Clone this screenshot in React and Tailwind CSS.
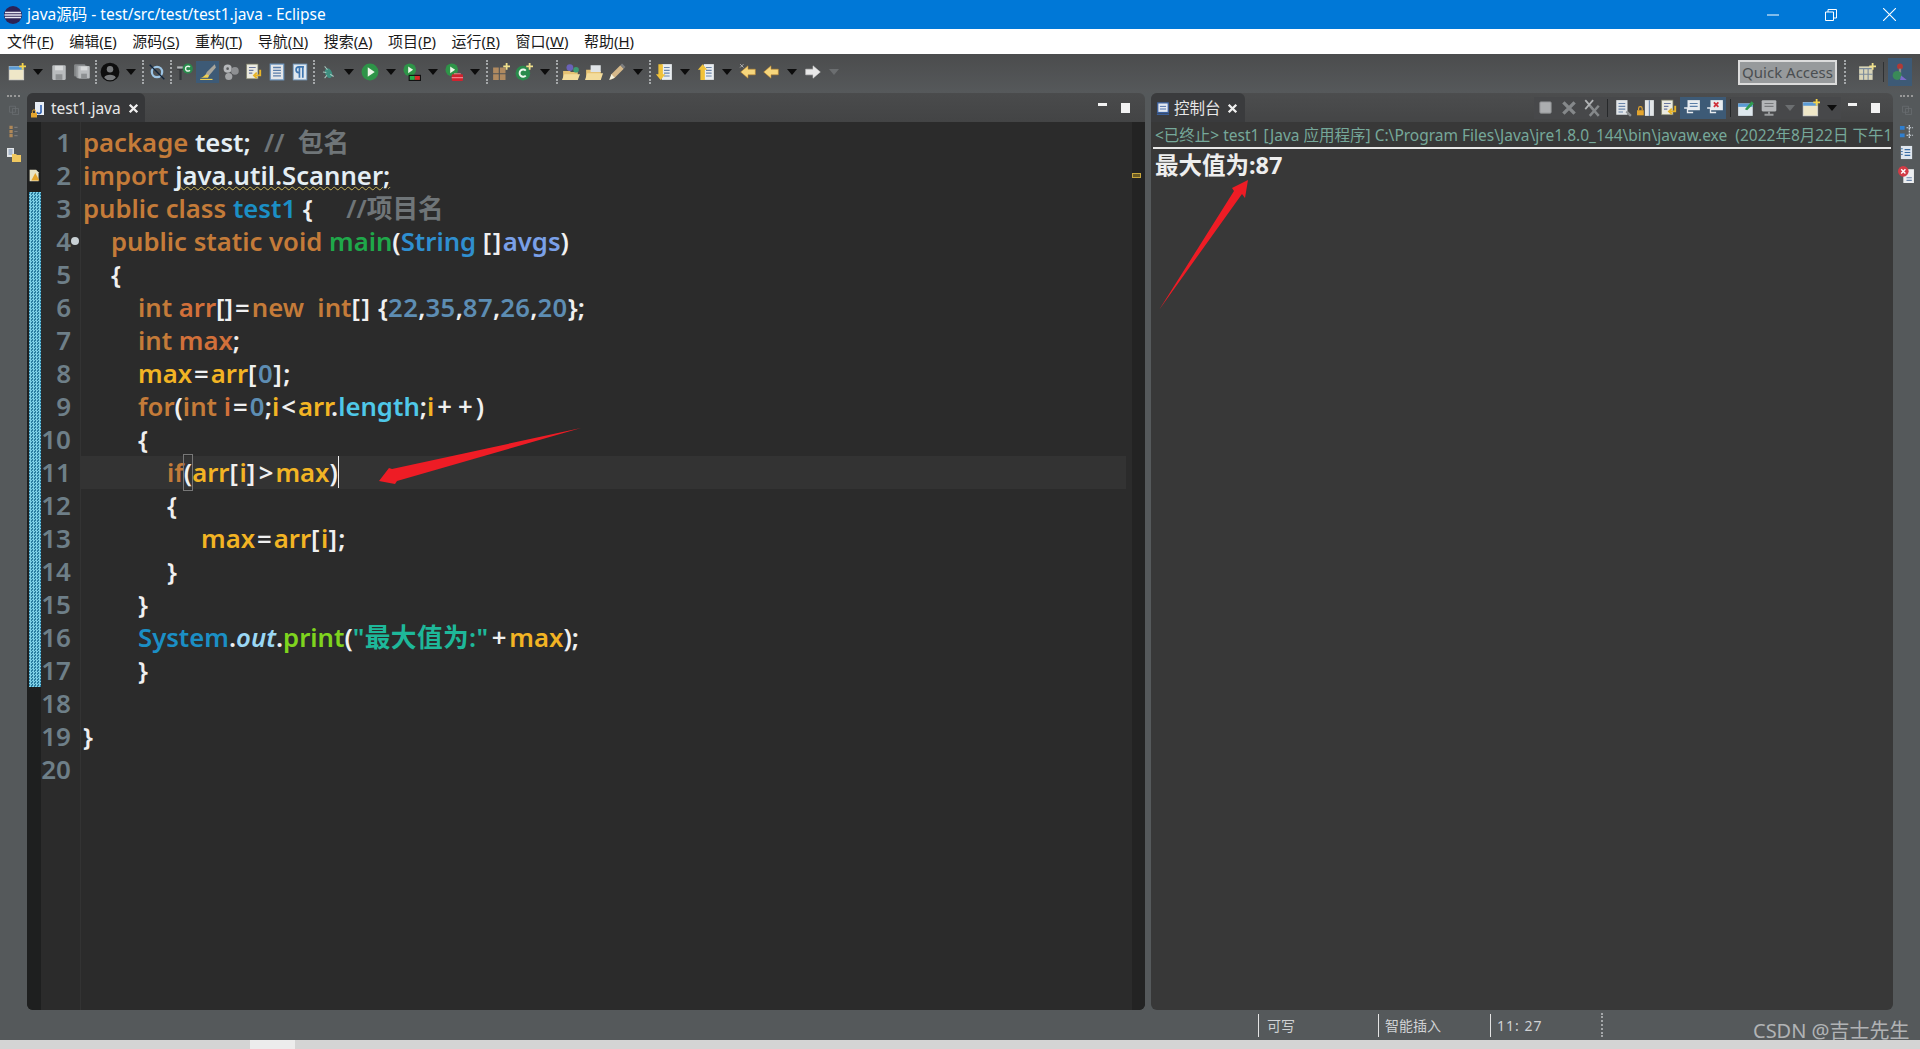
import React from 'react';

const kw = 'text-[#c47b39]';
const wh = 'text-[#f0f0f0]';
const br = 'text-[#f0f0f0] tracking-[1.5px]';
const eq = 'text-[#f0f0f0] mx-[2px]';
const pl = 'text-[#f0f0f0] mx-[3px]';
const cm = 'text-[#6f7578]';
const cl = 'text-[#1b8fc5]';
const yl = 'text-[#f2b424]';
const nm = 'text-[#5d8db3] tracking-[0.4px]';
const ln = 'text-[#d2703a]';

const code = [
  { pad: 'pl-0', t: [['package ', kw], ['test;', 'text-[#e4eef4]'], ['  //  包名', cm]] },
  { pad: 'pl-0', t: [['import ', kw], ['java.util.Scanner;', 'text-[#e4eef4] underline decoration-wavy decoration-1 decoration-[#c9b458]']] },
  { pad: 'pl-0', t: [['public class ', kw], ['test1', cl], [' {', wh], ['     //项目名', cm]] },
  { pad: 'pl-[28px]', t: [['public static void ', kw], ['main', 'text-[#1fa84a]'], ['(', wh], ['String', 'text-[#2f8fd0]'], [' ', wh], ['[]', br], ['avgs', 'text-[#7aa0e8]'], [')', wh]] },
  { pad: 'pl-[28px]', t: [['{', wh]] },
  { pad: 'pl-[55px]', t: [['int ', kw], ['arr', ln], ['[]', wh], ['=', eq], ['new  int', kw], ['[]', br], [' {', wh], ['22', nm], [',', wh], ['35', nm], [',', wh], ['87', nm], [',', wh], ['26', nm], [',', wh], ['20', nm], ['};', wh]] },
  { pad: 'pl-[55px]', t: [['int ', kw], ['max', ln], [';', wh]] },
  { pad: 'pl-[55px]', t: [['max', yl], ['=', eq], ['arr', yl], ['[', br], ['0', nm], [']', br], [';', wh]] },
  { pad: 'pl-[55px]', t: [['for', kw], ['(', wh], ['int ', kw], ['i', ln], ['=', eq], ['0', nm], [';', wh], ['i', yl], ['<', eq], ['arr', yl], ['.', wh], ['length', 'text-[#4fc8e8]'], [';', wh], ['i', yl], ['+', pl], ['+', pl], [')', wh]] },
  { pad: 'pl-[55px]', t: [['{', wh]] },
  { pad: 'pl-[84px]', active: true, t: [['if', kw], ['(', 'text-[#f0f0f0] outline outline-1 outline-[#777]'], ['arr', yl], ['[', br], ['i', yl], [']', br], ['>', eq], ['max', yl], [')', wh]] },
  { pad: 'pl-[84px]', t: [['{', wh]] },
  { pad: 'pl-[118px]', t: [['max', yl], ['=', eq], ['arr', yl], ['[', br], ['i', yl], [']', br], [';', wh]] },
  { pad: 'pl-[84px]', t: [['}', wh]] },
  { pad: 'pl-[55px]', t: [['}', wh]] },
  { pad: 'pl-[55px]', t: [['System', 'text-[#1b8fc5]'], ['.', wh], ['out', 'text-[#9bd8f5] italic'], ['.', wh], ['print', 'text-[#7fd41e]'], ['(', wh], ['"最大值为:"', 'text-[#1eb89a] tracking-[0.4px]'], ['+', pl], ['max', yl], [');', wh]] },
  { pad: 'pl-[55px]', t: [['}', wh]] },
  { pad: 'pl-0', t: [] },
  { pad: 'pl-0', t: [['}', wh]] },
  { pad: 'pl-0', t: [] },
];

const menus = [
  ['文件(', 'F'], ['编辑(', 'E'], ['源码(', 'S'], ['重构(', 'T'], ['导航(', 'N'],
  ['搜索(', 'A'], ['项目(', 'P'], ['运行(', 'R'], ['窗口(', 'W'], ['帮助(', 'H'],
];

function Ic({ children, size = 'w-[18px] h-[18px]' }) {
  return <svg viewBox="0 0 16 16" className={size}>{children}</svg>;
}

function Slot({ children, hl }) {
  return (
    <div className={`w-[23px] h-[22px] flex items-center justify-center shrink-0 ${hl ? 'bg-[#3d5a76]' : ''}`}>
      {children}
    </div>
  );
}

function Caret({ grey }) {
  return (
    <div className="w-[19px] flex justify-center shrink-0">
      <svg viewBox="0 0 10 6" className="w-[10px] h-[6px]">
        <path d="M0 0h10L5 6z" fill={grey ? '#6b6e70' : '#0c0c0c'} />
      </svg>
    </div>
  );
}

function Grip() {
  return <div className="w-[5px] flex justify-center shrink-0"><div className="h-[24px] border-l-2 border-dotted border-[#a4a7a9]" /></div>;
}

const NewWin = () => (
  <Ic>
    <rect x="1" y="3" width="13" height="12" fill="#efe7c8" stroke="#d8d8d8" strokeWidth=".6" />
    <rect x="1" y="3" width="13" height="3" fill="#5b9bd5" />
    <path d="M13 0v6M10 3h6" stroke="#f5d44c" strokeWidth="1.6" />
  </Ic>
);
const Floppy = ({ x = 2 }) => (
  <g>
    <rect x={x} y="2" width="12" height="13" rx="1" fill="#b9bcbe" />
    <rect x={x + 2.5} y="2.5" width="7" height="4" fill="#d8dadb" />
    <rect x={x + 3} y="10" width="6" height="5" fill="#8d9092" />
  </g>
);
const Save = () => <Ic><Floppy /></Ic>;
const SaveAll = () => (
  <Ic>
    <rect x="1" y="1" width="10" height="11" rx="1" fill="#85888a" />
    <rect x="3" y="2.5" width="10" height="11" rx="1" fill="#9a9d9f" />
    <g transform="translate(3 1) scale(.85)"><Floppy x={2} /></g>
  </Ic>
);
const Person = () => (
  <Ic size="w-[20px] h-[20px]">
    <circle cx="8" cy="8" r="7.5" fill="#0e0e0e" />
    <circle cx="8" cy="5.8" r="2.6" fill="#77797b" />
    <path d="M3.4 12.5c.6-3 8.6-3 9.2 0a6 6 0 0 1-9.2 0z" fill="#77797b" />
  </Ic>
);
const NoBreak = () => (
  <Ic>
    <circle cx="8" cy="8" r="4.6" fill="none" stroke="#9cc4e4" strokeWidth="2" />
    <path d="M1.5 1.5l13 13" stroke="#10233a" strokeWidth="1.2" />
  </Ic>
);
const OpenType = () => (
  <Ic>
    <path d="M1 4h6v2H5v9H3V6H1z" fill="#33373a" />
    <path d="M1 3h5v2H1z" fill="#b3b6b8" />
    <circle cx="10.5" cy="5" r="4.5" fill="#2a8a4c" />
    <path d="M12.4 3.6a2.2 2.2 0 1 0 0 2.8" fill="none" stroke="#e8f5ea" strokeWidth="1.3" />
  </Ic>
);
const Brush = () => (
  <Ic>
    <path d="M14 1L7 8l-2 4 4-1 6-7z" fill="#a9a69b" />
    <path d="M5 11c1-1 3-1 4 0l-1 2H1c2 0 3-1 4-2z" fill="#f0d050" />
    <path d="M1 14.6h11" stroke="#f0d050" strokeWidth="1" />
  </Ic>
);
const Gears = () => (
  <Ic>
    <circle cx="5" cy="5" r="3.6" fill="#b6b8ba" />
    <circle cx="11.5" cy="7" r="3.4" fill="#8e9092" />
    <circle cx="6" cy="12" r="3.2" fill="#a3a5a7" />
    <circle cx="5" cy="5" r="1.2" fill="#5a5c5e" />
  </Ic>
);
const DocArrow = () => (
  <Ic>
    <rect x="1.5" y="1" width="10" height="13" fill="#ecebe0" stroke="#8a8c70" strokeWidth=".6" />
    <path d="M3.5 4h6M3.5 6.5h4M3.5 9h3" stroke="#6a78a0" strokeWidth="1" />
    <path d="M13.5 6v5H8.5M10.5 8.5l-2.5 2.5 2.5 2.5" fill="none" stroke="#e8b428" strokeWidth="1.7" />
  </Ic>
);
const DocLines = () => (
  <Ic>
    <rect x="2" y="1" width="12" height="14" fill="#e4e7ea" stroke="#6f99c4" strokeWidth="1" />
    <path d="M4.5 4h7M4.5 6.5h7M4.5 9h7M4.5 11.5h7" stroke="#5a7eaa" strokeWidth="1.2" />
  </Ic>
);
const Pilcrow = () => (
  <Ic>
    <rect x="2" y="1" width="12" height="14" fill="#dfe8f0" stroke="#7aa2c8" strokeWidth=".8" />
    <path d="M7.5 13V3.5M10.5 13V3.5M11.5 3.5H7a2.5 2.5 0 0 0 0 5h.5" fill="none" stroke="#3e76b0" strokeWidth="1.5" />
  </Ic>
);
const Bug = () => (
  <Ic>
    <ellipse cx="8.5" cy="9" rx="3" ry="4.5" transform="rotate(-25 8.5 9)" fill="#3f8f80" />
    <path d="M5 3l2.5 3M3.5 8l3 .5M5 13.5l2-2.5M13 12l-3-2" stroke="#a8c8c0" strokeWidth=".9" />
  </Ic>
);
const Run = () => (
  <Ic>
    <circle cx="8" cy="8" r="7.5" fill="#2e9448" />
    <path d="M6 3.8v8.4L12.2 8z" fill="#ecf7e8" />
  </Ic>
);
const RunSmall = () => (
  <g>
    <circle cx="6" cy="6" r="5.6" fill="#2e9448" />
    <path d="M4.6 3v6L9 6z" fill="#ecf7e8" />
  </g>
);
const Coverage = () => (
  <Ic>
    <RunSmall />
    <rect x="5" y="10.5" width="11" height="5.5" fill="#111" />
    <rect x="6" y="11.5" width="4.5" height="3.5" fill="#25b04a" />
    <rect x="10.5" y="11.5" width="4.5" height="3.5" fill="#d62a2a" />
  </Ic>
);
const ExtTool = () => (
  <Ic>
    <RunSmall />
    <rect x="6" y="10" width="10" height="6" rx="1" fill="#d0222e" />
    <path d="M8 9.5h6M6 13h10" stroke="#f08088" strokeWidth=".9" />
  </Ic>
);
const NewPkg = () => (
  <Ic>
    <path d="M1 4h5v5H1zM7 4h5v5H7zM1 10h5v5H1zM7 10h5v5H7z" fill="#b08a60" />
    <path d="M13 0v6M10 3h6" stroke="#f0e08c" strokeWidth="1.6" />
  </Ic>
);
const NewClass = () => (
  <Ic>
    <circle cx="7" cy="9" r="6.5" fill="#2a8a4c" />
    <path d="M9.6 6.8a3.2 3.2 0 1 0 0 4.4" fill="none" stroke="#f0f8f0" strokeWidth="1.7" />
    <path d="M13 0v6M10 3h6" stroke="#f0e08c" strokeWidth="1.6" />
  </Ic>
);
const FolderProj = () => (
  <Ic>
    <path d="M1 7h6l1 1h6v7H1z" fill="#e6c274" />
    <path d="M0 15l2-5h14l-2 5z" fill="#f3dc9c" />
    <circle cx="7" cy="4" r="3" fill="#6a62b8" />
    <circle cx="12.5" cy="6" r="2.5" fill="#3c9a74" />
  </Ic>
);
const FolderOpen = () => (
  <Ic>
    <path d="M1 6h5l1 1h7v8H1z" fill="#e6c274" />
    <rect x="5" y="2" width="9" height="6" fill="#dfe3e6" />
    <path d="M0 15l2-6h14l-2 6z" fill="#f3dc9c" />
  </Ic>
);
const Pen = () => (
  <Ic>
    <path d="M11 2l3 3-8 8-4 2 1-5z" fill="#d6b98a" />
    <path d="M11 2l1.5-1.5 3 3L14 5z" fill="#7d7e80" />
    <path d="M1 15l2-5 3 3z" fill="#f6f2dc" />
  </Ic>
);
const NextAnn = ({ up }) => (
  <Ic>
    <rect x="6" y="1" width="9" height="14" fill="#e9edf0" />
    <path d="M8 4h5M8 6.5h5M8 9h5M8 11.5h5" stroke="#6a85aa" strokeWidth="1" />
    {up
      ? <path d="M5 1L.8 6H3v9h4V6h2.2z" fill="#f0c23a" />
      : <path d="M5 15L.8 10H3V1h4v9h2.2z" fill="#f0c23a" />}
  </Ic>
);
const ArrowBtn = ({ dir, fill = '#f6d67c', extra }) => (
  <Ic>
    <g transform={dir === 'r' ? 'translate(16 0) scale(-1 1)' : undefined}>
      <path d="M8 2.5L1.5 8 8 13.5V10.5h6.5v-5H8z" fill={fill} stroke={dir === 'r' ? '#cfcfcf' : '#c08a2c'} strokeWidth=".5" />
    </g>
    {extra && <path d="M1 1l3 3M4 1L1 4" stroke="#c5c5c5" strokeWidth=".7" />}
  </Ic>
);
const Lock = () => <><rect x="0" y="11" width="6" height="4.5" fill="#e5a52d" /><path d="M1.4 11V9.4a1.6 1.6 0 0 1 3.2 0V11" fill="none" stroke="#e5a52d" /></>;

const ConsoleStop = () => <Ic size="w-[15px] h-[15px]"><rect x="2" y="2" width="12" height="12" rx="1" fill="#acaeb0" stroke="#8d8f91" /></Ic>;
const ConsoleX = () => <Ic><path d="M3 3l10 10M13 3L3 13" stroke="#85888a" strokeWidth="3" /></Ic>;
const ConsoleXX = () => <Ic><path d="M2 1l7 8M9 1L2 9" stroke="#b0b2b4" strokeWidth="1.6" /><path d="M6 6l8 9M14 6l-8 9" stroke="#85888a" strokeWidth="2.2" /></Ic>;
const DocGrey = () => <Ic><rect x="2" y="1" width="10" height="13" fill="#e2e6ea" /><path d="M4 4h6M4 6.5h6M4 9h6M4 11.5h4" stroke="#6a85aa" /><path d="M11 11l4 4" stroke="#8f9294" strokeWidth="2" /></Ic>;
const ScrollLock = () => <Ic><rect x="7" y="1" width="8" height="14" fill="#e3e6e8" /><path d="M11 1v14" stroke="#6a85aa" /><g transform="translate(0 -1)"><Lock /></g></Ic>;
const Bubble = ({ red }) => (
  <Ic>
    <rect x="4" y="1" width="11" height="9" fill="#e8ecf0" />
    {red
      ? <path d="M7 3l4 4M11 3L7 7" stroke="#d0303a" strokeWidth="1.6" />
      : <path d="M6 4h7M6 6.5h7" stroke="#5a7ea8" strokeWidth="1.1" />}
    <path d="M1 8h3v4h5" fill="none" stroke="#e8ecf0" strokeWidth="1.2" />
  </Ic>
);
const Pin = () => <Ic><rect x="1" y="4" width="13" height="11" fill="#dfe8ee" /><rect x="1" y="4" width="13" height="3" fill="#5b9bd5" /><path d="M7 9l6-7 2 2-6 6z" fill="#2f9c50" /></Ic>;
const Monitor = () => <Ic><rect x="1.5" y="1" width="13" height="10" rx="1" fill="#b4b6b8" /><path d="M4 4h8M4 6.5h8" stroke="#77797b" /><path d="M8 11v2M4 14h8" stroke="#9a9c9e" strokeWidth="1.6" /></Ic>;

const Minimize = () => <div className="w-[23px] flex justify-center shrink-0"><div className="w-[9px] h-[3px] bg-[#f2f2f2] mb-[6px]" /></div>;
const Maximize = () => (
  <div className="w-[23px] flex justify-center shrink-0">
    <div className="w-[9px] h-[10px] border-t-[3px] border-[#f2f2f2] bg-[#f2f2f2]" />
  </div>
);
const TabClose = () => <Ic size="w-[11px] h-[11px]"><path d="M2.5 2.5l11 11M13.5 2.5l-11 11" stroke="#f0f0f0" strokeWidth="3.4" /></Ic>;

function Trim({ side }) {
  return (
    <div className="w-[27px] shrink-0 flex flex-col items-center">
      <div className="mt-[2px] h-[2px] w-[13px] border-t-2 border-dotted border-[#999]" />
      {side === 'left' ? (
        <>
          <div className="mt-[7px]"><Ic size="w-[12px] h-[12px]"><path d="M2 3h8v8H2zM6 6h8v8H6z" fill="none" stroke="#6a6d70" /></Ic></div>
          <div className="mt-[9px]"><Ic size="w-[13px] h-[13px]"><path d="M3 1h4v4H3zM3 6h4v4H3zM3 11h4v4H3z" fill="#b08858" /><path d="M9 3h4M9 8h4M9 13h4" stroke="#7a7a7a" strokeWidth="1.5" /></Ic></div>
          <div className="mt-[9px]"><Ic size="w-[16px] h-[16px]"><rect x="1" y="1" width="7" height="9" fill="#e4e6e8" /><path d="M2.5 3h4M2.5 5h4M2.5 7h4" stroke="#6a85aa" /><path d="M6 7h4l1 1h4v7H6z" fill="#f0c860" /></Ic></div>
        </>
      ) : (
        <>
          <div className="mt-[7px]"><Ic size="w-[12px] h-[12px]"><path d="M2 3h8v8H2zM6 6h8v8H6z" fill="none" stroke="#6a6d70" /></Ic></div>
          <div className="mt-[8px]"><Ic size="w-[15px] h-[15px]"><path d="M1 2h5v4H1zM1 10h5v4H1z" fill="#2f7fd0" /><path d="M8 4h7M8 12h7M11 1v14" stroke="#d5dde4" strokeWidth="1.3" strokeDasharray="2 1" /></Ic></div>
          <div className="mt-[6px]"><Ic size="w-[15px] h-[15px]"><rect x="2" y="1" width="12" height="14" fill="#dfe6ee" /><path d="M6 5h6M6 8h6M6 11h6" stroke="#3a6ea6" strokeWidth="1.3" /><path d="M2 4h2M2 7h2M2 10h2" stroke="#3a6ea6" /></Ic></div>
          <div className="mt-[6px]"><Ic size="w-[17px] h-[17px]"><rect x="5" y="3" width="10" height="13" fill="#eceef0" /><circle cx="5" cy="5" r="5" fill="#d33b45" /><path d="M3 3l4 4M7 3L3 7" stroke="#fff" strokeWidth="1.3" /><path d="M8 11h5M8 13.5h5" stroke="#6a85aa" /></Ic></div>
        </>
      )}
    </div>
  );
}

export default function App() {
  return (
    <div className="relative w-[1920px] h-[1049px] flex flex-col overflow-hidden bg-[#55595b] font-['Noto_Sans','Noto_Sans_CJK_SC',sans-serif]">
      {/* title bar */}
      <div className="h-[29px] bg-[#0078d7] flex items-center text-white shrink-0">
        <svg viewBox="0 0 18 18" className="ml-[4px] w-[18px] h-[18px]">
          <circle cx="9" cy="9" r="9" fill="#2c2255" />
          <path d="M1 6.5h16M.5 9h17M1 11.5h16" stroke="#e8e6f4" strokeWidth="1.3" />
        </svg>
        <span className="ml-[5px] text-[15.5px]">java源码 - test/src/test/test1.java - Eclipse</span>
        <div className="ml-auto flex items-center">
          <div className="w-[58px] flex justify-center"><svg viewBox="0 0 12 12" className="w-[12px] h-[12px]"><path d="M0 6h12" stroke="#fff" /></svg></div>
          <div className="w-[58px] flex justify-center"><svg viewBox="0 0 12 12" className="w-[12px] h-[12px]"><path d="M.5 3h8v8.5h-8zM3 3V.5h8.5V9H8.5" fill="none" stroke="#fff" /></svg></div>
          <div className="w-[58px] mr-[2px] flex justify-center"><svg viewBox="0 0 12 12" className="w-[13px] h-[13px]"><path d="M0 0l12 12M12 0L0 12" stroke="#fff" /></svg></div>
        </div>
      </div>

      {/* menu bar */}
      <div className="h-[25px] bg-white flex items-center pl-[7px] gap-[15.5px] text-[15px] text-[#1a1a1a] shrink-0">
        {menus.map(([a, b]) => (
          <span key={b}>{a}<span className="underline">{b}</span>)</span>
        ))}
      </div>

      {/* toolbar */}
      <div className="h-[39px] flex items-center pl-[5px] pb-[3px] shrink-0 bg-gradient-to-b from-[#4b4c4d] to-[#56595b]">
        <Slot><NewWin /></Slot><Caret /><Slot><Save /></Slot><Slot><SaveAll /></Slot><Grip />
        <Slot><Person /></Slot><Caret /><Grip />
        <Slot><NoBreak /></Slot><Grip />
        <Slot><OpenType /></Slot><Slot hl><Brush /></Slot><Slot><Gears /></Slot><Slot><DocArrow /></Slot><Slot><DocLines /></Slot><Slot><Pilcrow /></Slot><Grip />
        <Slot><Bug /></Slot><Caret /><Slot><Run /></Slot><Caret /><Slot><Coverage /></Slot><Caret /><Slot><ExtTool /></Slot><Caret /><Grip />
        <Slot><NewPkg /></Slot><Slot><NewClass /></Slot><Caret /><Grip />
        <Slot><FolderProj /></Slot><Slot><FolderOpen /></Slot><Slot><Pen /></Slot><Caret /><Grip />
        <Slot><NextAnn /></Slot><Caret /><Slot><NextAnn up /></Slot><Caret />
        <Slot><ArrowBtn extra /></Slot><Slot><ArrowBtn /></Slot><Caret />
        <Slot><ArrowBtn dir="r" fill="#e8e8e8" /></Slot><Caret grey />
        <div className="ml-auto flex items-center pr-[8px]">
          <div className="w-[99px] h-[25px] border-2 border-[#dcdcdc] bg-[#979a9c] text-[#4a4e51] text-[15px] flex items-center justify-center whitespace-nowrap">Quick Access</div>
          <div className="ml-[5px] mr-[8px]"><Grip /></div>
          <div className="w-[23px] flex justify-center"><Ic><rect x="1" y="3" width="12" height="12" fill="#d8d4b8" /><path d="M1 5h12M5 5v10M9 5v10M1 10h12" stroke="#7b8a9a" /><path d="M13 0v6M10 3h6" stroke="#f0e08c" strokeWidth="1.6" /></Ic></div>
          <div className="ml-[5px] w-[1px] h-[20px] bg-[#2f3133]" />
          <div className="ml-[4px] w-[24px] h-[28px] bg-[#3d5a76] flex items-center justify-center">
            <Ic size="w-[18px] h-[20px]"><circle cx="8" cy="3" r="2.6" fill="#b03a36" /><rect x="7" y="5" width="2" height="4" fill="#888" /><circle cx="5.5" cy="11" r="4" fill="#3a8a58" /><path d="M9 11l5 4H8z" fill="#7a6ac8" /></Ic>
          </div>
        </div>
      </div>

      {/* main area */}
      <div className="flex-1 flex min-h-0">
        <Trim side="left" />

        {/* editor */}
        <div className="w-[1118px] shrink-0 flex flex-col">
          <div className="h-[29px] flex items-end rounded-t-md bg-gradient-to-b from-[#4a4b4c] to-[#434445]">
            <div className="w-[118px] h-[29px] rounded-t-md bg-[#363739] flex items-center pl-[4px] pt-[2px] text-[15.5px] text-[#e8e8e8]">
              <Ic size="w-[16px] h-[18px]"><path d="M4 1h9v13H4z" fill="#e8eef6" /><path d="M10 4v6a2 2 0 0 1-4 1" fill="none" stroke="#3060b0" strokeWidth="1.6" /><g transform="translate(0 1)"><Lock /></g></Ic>
              <span className="ml-[4px]">test1.java</span>
              <div className="ml-[7px]"><TabClose /></div>
            </div>
            <div className="ml-auto h-full pr-[8px] flex items-center">
              <Minimize /><Maximize />
            </div>
          </div>
          <div className="flex-1 flex bg-[#2b2b2b] rounded-b-md overflow-hidden">
            <div className="w-[14px] shrink-0 bg-[#1e1f1f] pt-[4px]">
              <div className="h-[33px]" />
              <div className="h-[33px] flex items-center justify-center">
                <Ic size="w-[13px] h-[17px]"><path d="M2 1h8l3 3v11H2z" fill="#e9e4c6" /><path d="M6 4l5 9H1z" fill="#e5a52d" transform="translate(3 1)" /></Ic>
              </div>
              <div className="ml-[2px] h-[495px] bg-[repeating-conic-gradient(#7ed0e6_0_25%,#2a7da0_0_50%)] bg-[length:3px_3px]" />
            </div>
            <div className="w-[40px] shrink-0 pt-[4px] border-r border-[#333] text-[26px] leading-[33px] font-semibold text-[#6e7f88] text-right pr-[9px] relative">
              {code.map((_, i) => <div key={i} className="h-[33px]">{i + 1}</div>)}
              <div className="absolute left-[30px] top-[115px] w-[8px] h-[8px] rounded-full bg-[#c8d0d4]" />
            </div>
            <div className="flex-1 pt-[4px] pr-[6px] text-[25.7px] leading-[33px] font-semibold whitespace-pre">
              {code.map((row, i) => (
                <div key={i} className={`h-[33px] pl-[2px] ${row.active ? 'bg-[#333333]' : ''}`}>
                  <div className={row.pad}>
                    {row.t.map(([txt, c], j) => <span key={j} className={c}>{txt}</span>)}
                    {row.active && <span className="inline-block w-[1px] h-[32px] align-top bg-[#f0f0f0]" />}
                  </div>
                </div>
              ))}
            </div>
            <div className="w-[13px] shrink-0 bg-[#232323] pt-[51px]">
              <div className="w-[9px] h-[5px] border border-[#c8a63c] bg-[#6a5a24]" />
            </div>
          </div>
        </div>

        <div className="w-[6px] shrink-0" />

        {/* console */}
        <div className="w-[742px] shrink-0 flex flex-col">
          <div className="h-[29px] flex items-center rounded-t-md bg-gradient-to-b from-[#4c4d4e] to-[#444546]">
            <div className="w-[94px] h-[29px] rounded-t-md bg-[#3a3b3d] flex items-center pl-[5px] pt-[2px] text-[15.5px] text-[#e8e8e8]">
              <Ic size="w-[14px] h-[16px]"><rect x="2" y="1" width="12" height="11" fill="#e4eaf2" stroke="#3a60a0" strokeWidth="1.4" /><path d="M4.5 5h7M4.5 8h7" stroke="#3a60a0" /><path d="M1 14h14" stroke="#3a60a0" strokeWidth="1.6" /></Ic>
              <span className="ml-[4px]">控制台</span>
              <div className="ml-[6px]"><TabClose /></div>
            </div>
            <div className="ml-auto flex items-center pr-[6px]">
              <div className="flex items-center h-[22px] bg-[#47484a]">
                <Slot><ConsoleStop /></Slot><Slot><ConsoleX /></Slot><Slot><ConsoleXX /></Slot>
                <div className="w-[8px] flex justify-center"><div className="w-[1px] h-[18px] bg-[#26282a]" /></div>
                <Slot><DocGrey /></Slot><Slot><ScrollLock /></Slot><Slot><DocArrow /></Slot>
                <div className="flex bg-[#3d5a76]"><Slot><Bubble /></Slot><Slot><Bubble red /></Slot></div>
                <div className="w-[8px] flex justify-center"><div className="w-[1px] h-[18px] bg-[#26282a]" /></div>
                <Slot><Pin /></Slot><Slot><Monitor /></Slot><Caret grey /><Slot><NewWin /></Slot><Caret />
              </div>
              <Minimize /><Maximize />
            </div>
          </div>
          <div className="flex-1 bg-[#383838] rounded-b-md">
            <div className="mx-[2px] h-[27px] border-b-2 border-[#e8e8e8] text-[15.5px] leading-[26px] text-[#76a89a] pl-[2px] whitespace-pre overflow-hidden">
              {'<已终止> test1 [Java 应用程序] C:\\Program Files\\Java\\jre1.8.0_144\\bin\\javaw.exe  (2022年8月22日 下午1'}
            </div>
            <div className="pl-[4px] text-[23.5px] leading-[33px] font-bold text-[#eeeeee]">最大值为:87</div>
          </div>
        </div>

        <Trim side="right" />
      </div>

      {/* status bar */}
      <div className="h-[30px] shrink-0 flex items-center pl-[1258px] text-[14px] text-[#d0d2d4]">
        <div className="w-[120px] h-[23px] border-l border-[#e4e4e4] pl-[8px] leading-[23px]">可写</div>
        <div className="w-[112px] h-[23px] border-l border-[#e4e4e4] pl-[6px] leading-[23px]">智能插入</div>
        <div className="w-[109px] h-[23px] border-l border-[#e4e4e4] pl-[6px] leading-[23px] tracking-[1px]">11: 27</div>
        <Grip />
      </div>
      <div className="h-[9px] shrink-0 bg-[#d4d4d4] pl-[250px]">
        <div className="w-[45px] h-full bg-[#ececec]" />
      </div>

      {/* csdn watermark */}
      <div className="absolute left-[1753px] top-[1016px] text-[20px] text-[#c8cacc] opacity-80 whitespace-nowrap">CSDN @吉士先生</div>

      {/* red arrows drawn on the screenshot */}
      <svg viewBox="0 0 1920 1049" className="absolute inset-0 w-[1920px] h-[1049px] pointer-events-none">
        <path d="M581 428L397 481L395 484L379 481L389 468L392 469z" fill="#ee1c25" />
        <path d="M1159 310L1234 191L1232 188L1248 180L1245 198L1242 194z" fill="#ee1c25" />
      </svg>
    </div>
  );
}
